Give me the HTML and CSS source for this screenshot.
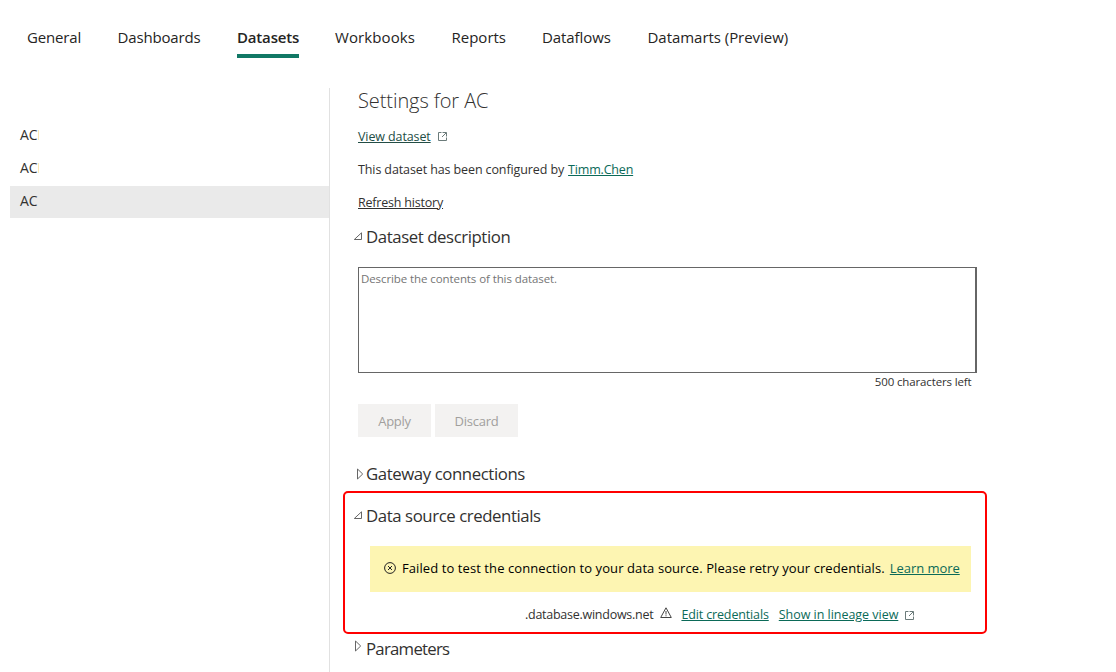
FILE: index.html
```
<!DOCTYPE html>
<html lang="en">
<head>
<meta charset="utf-8">
<title>Settings</title>
<link rel="stylesheet" href="styles.css">
</head>
<body>
<nav class="tabs">
  <a class="tab general">General</a>
  <a class="tab dashboards">Dashboards</a>
  <a class="tab datasets active">Datasets</a>
  <a class="tab workbooks">Workbooks</a>
  <a class="tab reports">Reports</a>
  <a class="tab dataflows">Dataflows</a>
  <a class="tab datamarts">Datamarts (Preview)</a>
</nav>
<div class="layout">
  <aside class="sidebar">
    <div class="item clipped">AC</div>
    <div class="item clipped">AC</div>
    <div class="item selected">AC</div>
  </aside>
  <main class="content">
    <h1 class="title">Settings for AC</h1>
    <div class="line"><a class="link dark view">View dataset</a><svg class="external" viewBox="0 0 9 9"><path d="M3.500 .5H.5v8h8v-3M4.500 .5h4v4M4 5l4.200-4.200"/></svg></div>
    <div class="line"><span class="configured">This dataset has been configured by</span><a class="link owner">Timm.Chen</a></div>
    <div class="line"><a class="link dark history">Refresh history</a></div>
    <h2 class="heading"><svg class="arrow" viewBox="0 0 10 10"><path d="M1.300 7.500H8.500V.8z"/></svg><span>Dataset description</span></h2>
    <textarea class="editor" placeholder="Describe the contents of this dataset."></textarea>
    <div class="counter"><span>500 characters left</span></div>
    <div class="actions"><button class="button apply" disabled>Apply</button><button class="button discard" disabled>Discard</button></div>
    <h2 class="heading gateway"><svg class="arrow closed" viewBox="0 0 8 12"><path d="M1.500 1v10l5.200-5z"/></svg><span>Gateway connections</span></h2>
    <section class="credentials">
      <h2 class="heading"><svg class="arrow" viewBox="0 0 10 10"><path d="M1.300 7.500H8.500V.8z"/></svg><span>Data source credentials</span></h2>
      <div class="banner">
        <svg class="error" viewBox="0 0 12 12"><circle cx="6" cy="6" r="5.400"/><path d="M4 4l4 4M8 4L4 8"/></svg>
        <span class="message">Failed to test the connection to your data source. Please retry your credentials.</span><a class="link learn">Learn more</a>
      </div>
      <div class="source">
        <span class="host">.database.windows.net</span>
        <svg class="warning" viewBox="0 0 12 12"><path d="M6 .8L.7 10.500h10.600zM6 4v3.500M6 8.300v1"/></svg>
        <a class="link edit">Edit credentials</a><a class="link lineage">Show in lineage view</a>
        <svg class="external" viewBox="0 0 9 9"><path d="M3.500 .5H.5v8h8v-3M4.500 .5h4v4M4 5l4.200-4.200"/></svg>
      </div>
    </section>
    <h2 class="heading parameters"><svg class="arrow closed" viewBox="0 0 8 12"><path d="M1.500 1v10l5.200-5z"/></svg><span>Parameters</span></h2>
  </main>
</div>
</body>
</html>
```
FILE: styles.css
```
* { box-sizing: border-box; }
body { margin: 0; height: 672px; overflow: hidden; background: #fff; color: #323130; font: 12.5px/20px "Open Sans", "Noto Sans", sans-serif; white-space: nowrap; }
svg { fill: none; stroke: #444; stroke-width: 1; flex: none; }
.tabs { display: flex; gap: 36px; height: 88px; padding: 17px 0 0 27px; }
.tab { height: 41px; font-size: 15px; line-height: 41px; color: #252423; letter-spacing: -.08px; }
.general { width: 54.5px; letter-spacing: -.15px; }
.dashboards { width: 83.5px; letter-spacing: -.15px; }
.datasets { width: 62px; }
.workbooks { width: 80.5px; letter-spacing: .1px; }
.reports { width: 54.5px; letter-spacing: 0; }
.dataflows { width: 69.5px; }
.datamarts { width: 142px; letter-spacing: -.04px; }
.tab.active { font-weight: 600; border-bottom: 4px solid #117865; letter-spacing: -.17px; }
.layout { display: flex; height: 584px; }
.sidebar { display: flex; flex-direction: column; gap: 1px; width: 330px; padding: 32px 0 0 10px; border-right: 1px solid #e1e1e1; }
.item { height: 32px; padding-left: 10px; font-size: 14px; line-height: 29px; color: #323130; }
.clipped::after { content: ""; display: inline-block; width: 1px; height: 10px; background: #fde9b5; }
.selected { background: #eaeaea; }
.content { flex: 1; padding-left: 28px; }
.title { margin: 0; height: 32px; font-size: 20px; line-height: 26px; font-weight: 300; color: #323130; letter-spacing: -.08px; }
.line { display: flex; align-items: center; height: 33px; letter-spacing: -.11px; }
.link { color: #0b6a58; text-decoration: underline; text-underline-offset: 1px; }
.dark { color: #323130; }
.view { color: #234d45; }
.line .external { margin-left: 7px; }
.external { width: 9px; height: 9px; stroke: #6b7b7a; }
.owner { margin-left: 4px; letter-spacing: -.18px; }
.history { letter-spacing: -.2px; }
.heading { display: flex; align-items: center; height: 36px; margin: 0 0 0 -5px; font-size: 16.8px; line-height: 24px; font-weight: 400; letter-spacing: -.42px; }
.arrow { width: 10px; height: 10px; margin-right: 3px; stroke: #666; }
.closed { width: 8px; height: 12px; margin: 0 2px 0 3px; }
.editor { display: block; width: 619px; height: 106px; margin: 12px 0 0; padding: 2px; border: 1px solid #666; border-right-width: 2px; resize: none; outline: none; font: 11.5px/17px "Open Sans", "Noto Sans", sans-serif; letter-spacing: -.09px; }
.editor::placeholder { color: #757575; }
.counter { display: flex; justify-content: flex-end; width: 613.5px; height: 31px; font-size: 11.5px; line-height: 18px; letter-spacing: -.14px; }
.actions { display: flex; gap: 4px; }
.button { height: 33px; padding: 2px 0 0; border: 0; background: #f3f2f1; color: #a19f9d; font: 13px/31px "Open Sans", "Noto Sans", sans-serif; letter-spacing: -.25px; }
.apply { width: 73px; }
.discard { width: 83px; }
.gateway { height: 34px; margin-top: 20px; }
.credentials { width: 644px; height: 143px; margin-left: -15px; padding: 5px 14px 0 13px; border: 2px solid #f00; border-radius: 5px; }
.credentials .heading { margin-left: -5px; }
.banner { display: flex; align-items: center; width: 601px; height: 46px; margin: 12px 0 0 12px; padding: 0 0 2px 14px; background: #fdf5b2; color: #000; font-size: 13px; }
.error { width: 12px; height: 12px; margin-right: 6px; stroke: #222; }
.message { letter-spacing: .085px; }
.learn { margin-left: 5px; letter-spacing: -.05px; }
.source { display: flex; align-items: center; height: 46px; padding-left: 167px; }
.host { letter-spacing: -.26px; }
.warning { width: 12px; height: 12px; margin: -4px 9px 0 7px; }
.edit { letter-spacing: -.14px; }
.lineage { margin: 0 7px 0 10px; letter-spacing: -.03px; }
.parameters { height: 30px; letter-spacing: -.75px; }
.parameters .closed { margin: -6px 4px 0 1px; }
```
